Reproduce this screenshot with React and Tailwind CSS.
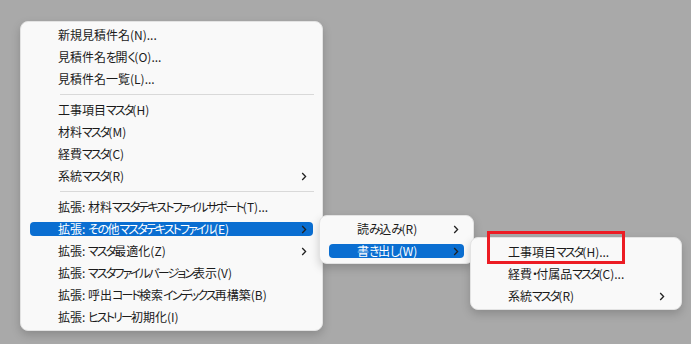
import React from "react";

const Chevron = () => (
  <svg width="6" height="9" viewBox="0 0 6 9" className="shrink-0">
    <path d="M1.2 1 L4.6 4.5 L1.2 8" fill="none" stroke="#222" strokeWidth="1.3" />
  </svg>
);

const renderLabel = (label) => {
  const parts = label.split(/([\u30A0-\u30FF]+|[\u3040-\u309F]+)/).filter(Boolean);
  return parts.map((p, i) => {
    if (/^[\u30A0-\u30FF]+$/.test(p)) {
      return (
        <span key={i} className="tracking-[-1.9px]">
          {p}
        </span>
      );
    }
    if (/^[\u3040-\u309F]+$/.test(p)) {
      return (
        <span key={i} className="tracking-[-1.5px]">
          {p}
        </span>
      );
    }
    return <span key={i}>{p}</span>;
  });
};

const Item = ({ label, arrow, active, textLeft = "pl-[28px]", arrowRight = "pr-[6px]" }) => (
  <div className="h-[22px] px-[9px] flex items-center">
    <div
      className={`flex-1 h-[14px] rounded-[4px] flex items-center justify-between ${textLeft} ${arrowRight} ${
        active ? "bg-[#0a6ed1] text-white" : "text-[#1b1b1b]"
      }`}
    >
      <span className="whitespace-nowrap leading-none">{renderLabel(label)}</span>
      {arrow && <Chevron />}
    </div>
  </div>
);

const Sep = () => (
  <div className="h-[9px] flex items-center pl-[39px] pr-[8px]">
    <div className="h-px w-full bg-[#d9d9d9]" />
  </div>
);

const menuCls =
  "bg-[#f9f9f9] rounded-[8px] border border-[#e3e3e3] shadow-[0_4px_10px_rgba(0,0,0,0.18)]";

export default function App() {
  return (
    <div
      className="relative w-[691px] h-[344px] bg-[#a9a9a9] overflow-hidden text-[12px] [font-feature-settings:'palt']"
      style={{ fontFamily: '"Noto Sans CJK JP", "Noto Sans", sans-serif' }}
    >
      <div className="pt-[21px] pl-[20px]">
        <div className={`w-[303px] pt-[2px] pb-[2px] ${menuCls}`}>
          <Item label="新規見積件名(N)..." />
          <Item label="見積件名を開く(O)..." />
          <Item label="見積件名一覧(L)..." />
          <Sep />
          <Item label="工事項目マスタ(H)" />
          <Item label="材料マスタ(M)" />
          <Item label="経費マスタ(C)" />
          <Item label="系統マスタ(R)" arrow />
          <Sep />
          <Item label="拡張: 材料マスタテキストファイルサポート(T)..." />
          <Item label="拡張: その他マスタテキストファイル(E)" arrow active />
          <Item label="拡張: マスタ最適化(Z)" arrow />
          <Item label="拡張: マスタファイルバージョン表示(V)" />
          <Item label="拡張: 呼出コード検索インデックス再構築(B)" />
          <Item label="拡張: ヒストリー初期化(I)" />
        </div>
      </div>

      <div className={`absolute left-[319px] top-[215px] w-[155px] pt-[2px] pb-[1px] ${menuCls}`}>
        <Item label="読み込み(R)" arrow textLeft="pl-[28px]" arrowRight="pr-[5px]" />
        <Item label="書き出し(W)" arrow active textLeft="pl-[28px]" arrowRight="pr-[5px]" />
      </div>

      <div className={`absolute left-[470px] top-[237px] w-[212px] pt-[3px] pb-[2px] ${menuCls}`}>
        <Item label="工事項目マスタ(H)..." />
        <Item label="経費・付属品マスタ(C)..." />
        <Item label="系統マスタ(R)" arrow arrowRight="pr-[7px]" />
      </div>

      <div className="absolute left-[487px] top-[231px] w-[138px] h-[33px] border-[3px] border-[#ec1c24]" />
    </div>
  );
}
